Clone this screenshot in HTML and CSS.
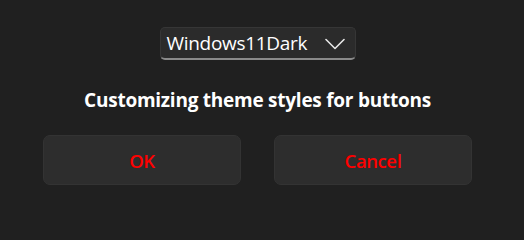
FILE: index.html
```html
<!DOCTYPE html>
<html>
<head>
<meta charset="utf-8">
<link rel="stylesheet" href="styles.css">
</head>
<body>
<div class="page">
  <div class="combo">
    <span class="combo-text">Windows11Dark</span>
    <svg class="chevron" width="20" height="12" viewBox="0 0 20 12"><path d="M1 1.5 L10 10.5 L19 1.5" fill="none" stroke="#e6e6e6" stroke-width="1.6" stroke-linecap="round" stroke-linejoin="round"/></svg>
  </div>
  <div class="title">Customizing theme styles for buttons</div>
  <div class="buttons">
    <button class="btn">OK</button>
    <button class="btn">Cancel</button>
  </div>
</div>
</body>
</html>
```
FILE: styles.css
```css
html, body {
  margin: 0;
  padding: 0;
  background: #202020;
}
body {
  width: 524px;
  height: 225px;
  overflow: hidden;
  font-family: "Open Sans", "Noto Sans", sans-serif;
}
.page {
  width: 429px;
  padding: 27px 0 0 43px;
  display: flex;
  flex-direction: column;
  align-items: center;
}
.combo {
  box-sizing: border-box;
  width: 196px;
  height: 33px;
  background: #2b2b2b;
  border: 1px solid #363636;
  border-bottom: 2px solid #8a8a8a;
  border-radius: 5px;
  display: flex;
  align-items: center;
  padding: 0 10px 0 6px;
}
.combo-text {
  color: #ffffff;
  font-size: 19px;
  flex: 1;
  line-height: 1;
  letter-spacing: -0.3px;
}
.chevron {
  display: block;
  margin-top: 1px;
}
.title {
  margin-top: 27px;
  color: #ffffff;
  font-weight: 700;
  font-size: 19px;
  line-height: 26px;
  letter-spacing: -0.25px;
}
.buttons {
  margin-top: 22px;
  width: 100%;
  display: grid;
  grid-template-columns: 1fr 1fr;
  gap: 33px;
}
.btn {
  height: 50px;
  background: #2d2d2d;
  border: 1px solid #333333;
  border-radius: 7px;
  color: #ff0000;
  font-family: "Open Sans", "Noto Sans", sans-serif;
  font-size: 18.5px;
  font-weight: 600;
  padding: 0;
  letter-spacing: -0.4px;
}
```
